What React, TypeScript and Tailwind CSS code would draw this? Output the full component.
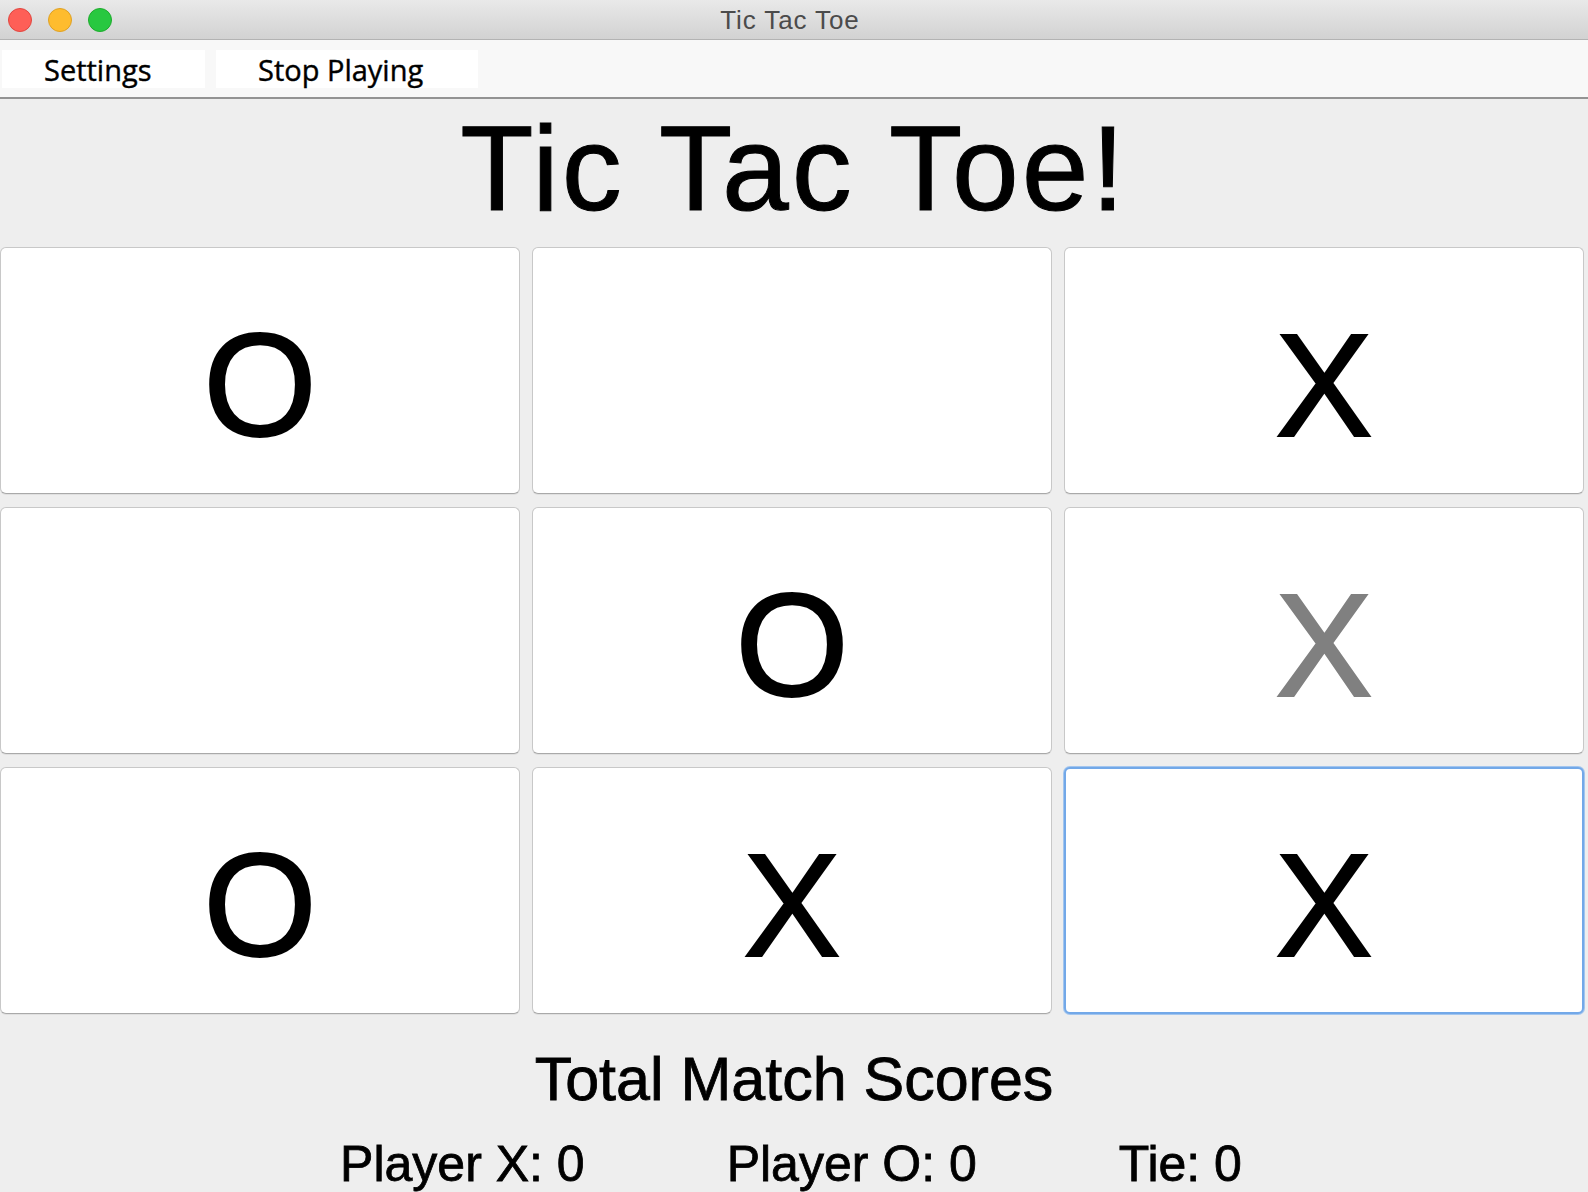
import React from "react";

type Cell = { v: string; grey?: boolean; focus?: boolean };

const cells: Cell[] = [
  { v: "O" },
  { v: "" },
  { v: "X" },
  { v: "" },
  { v: "O" },
  { v: "X", grey: true },
  { v: "O" },
  { v: "X" },
  { v: "X", focus: true },
];

export default function App() {
  return (
    <div className="w-[1588px] h-[1192px] overflow-hidden bg-[#eeeeee] flex flex-col">
      {/* Title bar */}
      <div className="h-[40px] shrink-0 grid grid-cols-[1fr_auto_1fr] items-center bg-gradient-to-b from-[#e9e9e9] to-[#d2d2d2] border-b border-[#b3b3b3]">
        <div className="flex items-center gap-[16px] pl-[8px]">
          <span className="w-[24px] h-[24px] rounded-full bg-[#fe5f57] border border-[#e1463f]" />
          <span className="w-[24px] h-[24px] rounded-full bg-[#febc2e] border border-[#dfa124]" />
          <span className="w-[24px] h-[24px] rounded-full bg-[#28c840] border border-[#1dac2c]" />
        </div>
        <div
          className="text-[26px] leading-none tracking-[0.9px] text-[#4b4b4b] pr-[8px]"
          style={{ fontFamily: '"Liberation Sans", Arial, sans-serif' }}
        >
          Tic Tac Toe
        </div>
        <div />
      </div>

      {/* Menu bar */}
      <div
        className="h-[59px] shrink-0 bg-[#f8f8f8] border-b-2 border-[#939393] flex items-start pt-[10px] pl-[2px] gap-[11px]"
        style={{ fontFamily: '"Open Sans", "Noto Sans", sans-serif' }}
      >
        <div className="w-[203px] h-[38px] bg-white flex items-center pl-[42px] text-[29px] leading-none text-black [-webkit-text-stroke:0.4px_black]">
          Settings
        </div>
        <div className="w-[262px] h-[38px] bg-white flex items-center pl-[42px] text-[29px] leading-none text-black [-webkit-text-stroke:0.4px_black]">
          Stop Playing
        </div>
      </div>

      {/* Main */}
      <div
        className="flex flex-col"
        style={{ fontFamily: '"Liberation Sans", Arial, sans-serif' }}
      >
        <div className="h-[148px] flex justify-center pt-[9px]">
          <div className="text-[120px] leading-none tracking-[3px] text-black [-webkit-text-stroke:1px_black]">
            Tic Tac Toe!
          </div>
        </div>

        <div className="grid grid-cols-3 gap-x-[12px] gap-y-[13px] pr-[4px]">
          {cells.map((c, i) => (
            <div
              key={i}
              className={
                c.focus
                  ? "h-[247px] bg-white rounded-[6px] border-2 border-[#72a8e8] shadow-[0_0_0_1px_rgba(130,180,238,0.7)] flex items-center justify-center pt-[30px]"
                  : "h-[247px] bg-white rounded-[6px] border border-[#c8c8c8] border-b-[#a9a9a9] shadow-[0_1px_0_rgba(0,0,0,0.06)] flex items-center justify-center pt-[30px]"
              }
            >
              <span
                className={
                  c.grey
                    ? "text-[146px] leading-none text-[#808080] [-webkit-text-stroke:2px_#808080]"
                    : "text-[146px] leading-none text-black [-webkit-text-stroke:2px_black]"
                }
              >
                {c.v}
              </span>
            </div>
          ))}
        </div>

        <div className="mt-[35px] flex justify-center">
          <div className="text-[61px] leading-none text-black [-webkit-text-stroke:0.8px_black]">
            Total Match Scores
          </div>
        </div>

        <div className="mt-[29px] flex justify-center gap-[142px] pr-[6px] text-[50px] leading-none text-black [-webkit-text-stroke:0.8px_black]">
          <div>Player X: 0</div>
          <div>Player O: 0</div>
          <div>Tie: 0</div>
        </div>
      </div>
    </div>
  );
}
